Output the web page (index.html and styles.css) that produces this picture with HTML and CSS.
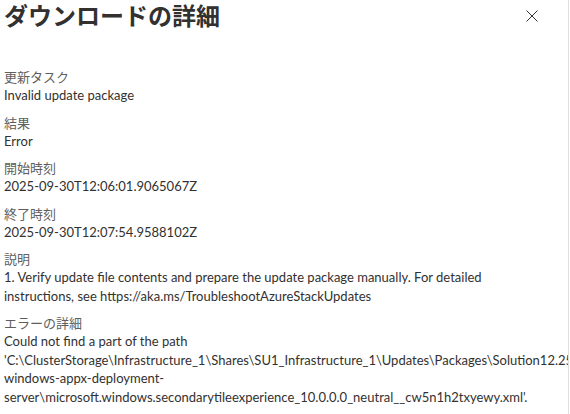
FILE: index.html
```html
<!DOCTYPE html>
<html lang="ja">
<head>
<meta charset="utf-8">
<link rel="stylesheet" href="styles.css">
</head>
<body>
<div class="panel">
  <header class="head">
    <h1 class="title">ダウンロードの詳細</h1>
    <button class="close" aria-label="閉じる">
      <svg width="12" height="12" viewBox="0 0 12 12"><path d="M0.5 0.5L11.5 11.5M11.5 0.5L0.5 11.5" stroke="#323130" stroke-width="1" fill="none"/></svg>
    </button>
  </header>
  <div class="body">
    <div class="field">
      <div class="label">更新タスク</div>
      <div class="value">Invalid update package</div>
    </div>
    <div class="field">
      <div class="label">結果</div>
      <div class="value">Error</div>
    </div>
    <div class="field">
      <div class="label">開始時刻</div>
      <div class="value">2025-09-30T12:06:01.9065067Z</div>
    </div>
    <div class="field">
      <div class="label">終了時刻</div>
      <div class="value">2025-09-30T12:07:54.9588102Z</div>
    </div>
    <div class="field">
      <div class="label">説明</div>
      <div class="value">1. Verify update file contents and prepare the update package manually. For detailed instructions, see https://aka.ms/TroubleshootAzureStackUpdates</div>
    </div>
    <div class="field">
      <div class="label">エラーの詳細</div>
      <div class="value">Could not find a part of the path 'C:\ClusterStorage\Infrastructure_1\Shares\SU1_Infrastructure_1\Updates\Packages\Solution12.2509.1001.22\Microsoft-windows-appx-deployment-server\microsoft.windows.secondarytileexperience_10.0.0.0_neutral__cw5n1h2txyewy.xml'.</div>
    </div>
  </div>
</div>
</body>
</html>
```
FILE: styles.css
```css
html, body {
  margin: 0;
  padding: 0;
  background: #ffffff;
}
body {
  font-family: "Segoe UI", Lato, "Noto Sans CJK JP", sans-serif;
  color: #323130;
  width: 570px;
  height: 414px;
  overflow: hidden;
}
.panel {
  width: 568px;
  height: 414px;
  border-right: 1px solid #e1dfdd;
  overflow: hidden;
  box-sizing: content-box;
}
.head {
  display: flex;
  align-items: flex-start;
  justify-content: space-between;
  padding: 0 30px 0 4px;
  height: 67px;
}
.title {
  margin: 0;
  font-family: "Noto Sans CJK JP", sans-serif;
  font-size: 24px;
  font-weight: 700;
  line-height: 30px;
  color: #323130;
}
.close {
  border: 0;
  background: none;
  padding: 0;
  margin-top: 10px;
  width: 12px;
  height: 12px;
  display: flex;
}
.body {
  width: 500px;
  padding-left: 4px;
  display: flex;
  flex-direction: column;
  gap: 8px;
}
.label {
  font-family: "Noto Sans CJK JP", sans-serif;
  font-size: 13px;
  line-height: 19px;
  color: #605e5c;
}
.value {
  font-size: 13px;
  line-height: 18.5px;
  color: #323130;
}
```
